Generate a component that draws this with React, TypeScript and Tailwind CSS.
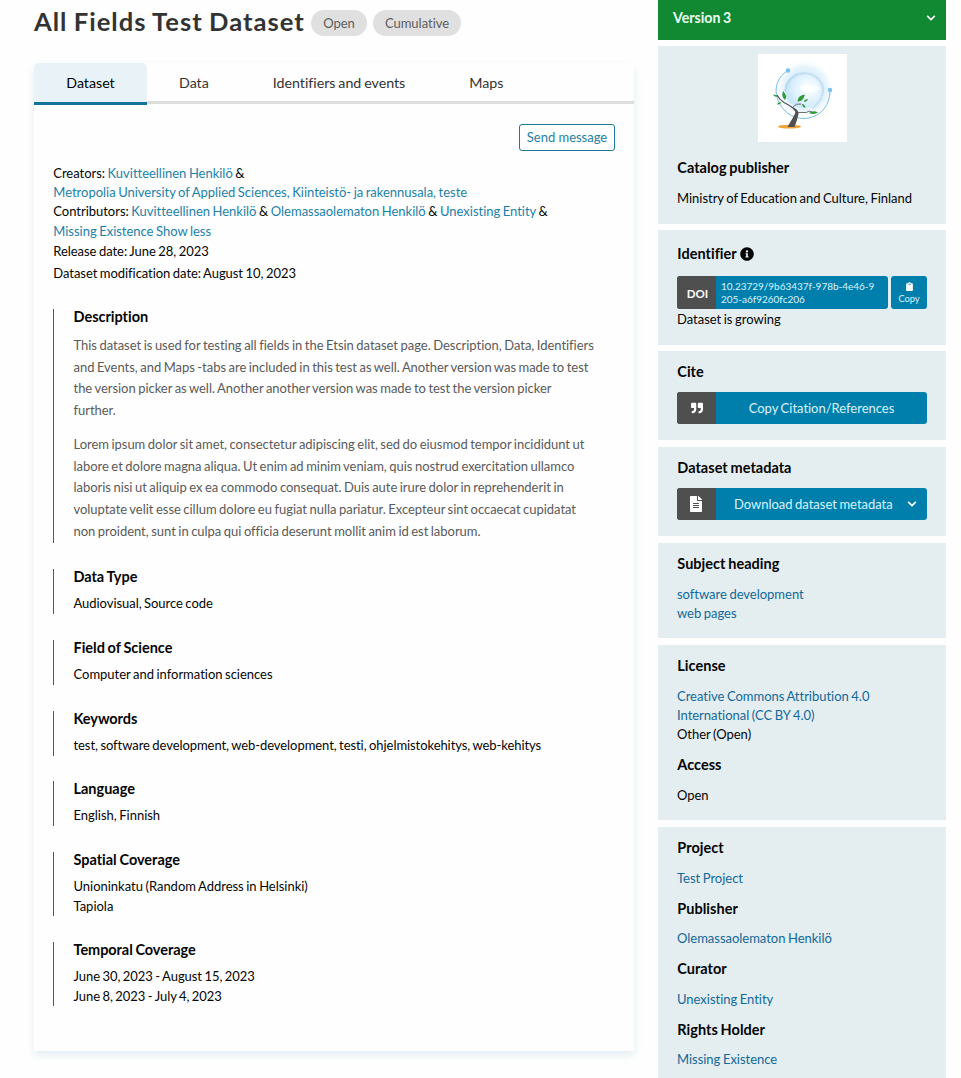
import type { ReactNode } from 'react'
import { FaInfoCircle, FaQuoteRight, FaFileAlt, FaClipboard, FaChevronDown } from 'react-icons/fa'

const tabs = ['Data', 'Identifiers and events', 'Maps']

function Link({ children }: { children: ReactNode }) {
  return <a className="text-[#1c81a9]">{children}</a>
}

function Section({ title, className, children }: { title: string; className: string; children: ReactNode }) {
  return (
    <section className={`flex gap-[19.5px] ${className}`}>
      <div className="w-px shrink-0 bg-[#007a80]" />
      <div>
        <h2 className="h-[25px] text-[14.5px] font-bold leading-[16.4px]">{title}</h2>
        <div className="leading-[19.8px]">{children}</div>
      </div>
    </section>
  )
}

function Panel({ className, children }: { className: string; children: ReactNode }) {
  return <section className={`w-full bg-[#e4edf0] px-[19px] ${className}`}>{children}</section>
}

function PanelTitle({ children }: { children: ReactNode }) {
  return <h2 className="flex items-center pl-[0.3px] text-[14.5px] font-bold leading-5 tracking-[0.02px]">{children}</h2>
}

function Logo() {
  return (
    <svg viewBox="0 0 89 88" className="mx-auto h-[88px] w-[89px] bg-white">
      <defs>
        <radialGradient id="halo">
          <stop offset="0.45" stopColor="#d3ecfc" />
          <stop offset="0.75" stopColor="#e9f5fd" />
          <stop offset="1" stopColor="#fff" stopOpacity="0" />
        </radialGradient>
        <radialGradient id="globe" cx="0.65" cy="0.45" r="0.7">
          <stop offset="0.1" stopColor="#fafdff" />
          <stop offset="0.5" stopColor="#e2f3fe" />
          <stop offset="1" stopColor="#bfe1f8" />
        </radialGradient>
      </defs>
      <circle cx="47" cy="35" r="30" fill="url(#halo)" />
      <circle cx="45" cy="36" r="18" fill="url(#globe)" />
      <path d="M42 33q6-5 10-1q7-2 10 2q-4 6-11 4q-7 1-9-5" fill="#fff" opacity="0.75" />
      <path d="M27 37A19.5 19.5 0 0 1 65 33Q66 45 55 54" fill="none" stroke="#8dbfdc" strokeWidth="2.2" strokeDasharray="1 .7" opacity="0.5" />
      <path d="M30 16.500C20 22 16 34 19 43C23 57 34 64.500 46 64.500C60 64 72 54 72 36" fill="none" stroke="#75bde9" strokeWidth="1" />
      <circle cx="30" cy="16.500" r="2.200" fill="#75c2ef" />
      <circle cx="72" cy="36" r="2.200" fill="#75c2ef" />
      <ellipse cx="31.500" cy="72.700" rx="11.500" ry="1.900" fill="#efa537" />
      <path d="M19 41Q21 45 26 48.500C31 51 36 54 38 57.500" fill="none" stroke="#505050" strokeWidth="1.100" />
      <path d="M29.500 73C34 65 37 61 37.500 57.500Q35 54 32 52Q41 55 40.500 60Q39 67 36.500 73Z" fill="#505050" />
      <path d="M35 53Q38 49 43 50M39.500 58.500H48Q52 56 54 58" fill="none" stroke="#505050" strokeWidth=".8" />
      <g fill="#2f9b35">
        <path d="M25 37Q30 42 27 46Q23 43 25 37Z" />
        <path d="M39.500 47.500Q40 41 47 40.500Q45 48 39.500 47.500Z" />
        <path d="M46 48Q46.500 45 50 45Q49 48 46 48Z" />
        <path d="M43.500 50Q47 50 47.500 54Q44.500 53 43.500 50Z" />
        <path d="M51 59Q55 56 60 58.500Q56 61 51 59Z" />
        <path d="M15 40.500Q18 40 20.500 43Q16 43 15 40.500Z" />
        <path d="M19 50.500Q20 47.500 23.500 48.500Q22 51 19 50.500Z" />
      </g>
    </svg>
  )
}

export default function App() {
  return (
    <div className="h-[1078px] w-[961px] overflow-hidden bg-[#fefefe] font-['Lato',sans-serif] text-[13px] tracking-[-0.02px] text-[#050505] [font-variant-ligatures:none] [word-spacing:-0.75px]">
      <div className="flex gap-6 pl-[34px]">
        <main className="w-[600px] shrink-0">
          <header className="flex h-[63px] items-start whitespace-nowrap">
            <h1 className="w-[277px] pt-[2px] text-[25.6px] font-bold leading-[38px] tracking-[0.97px] text-[#333]">All Fields Test Dataset</h1>
            <span className="mt-[10px] h-[26px] w-14 rounded-full bg-[#e0e0e0] text-center text-[13px] leading-[26px] text-[#5d5d5d]">Open</span>
            <span className="ml-1.5 mt-[10px] h-[26px] w-[88px] rounded-full bg-[#e0e0e0] text-center text-[13px] leading-[26px] text-[#5d5d5d]">Cumulative</span>
          </header>
          <div className="h-[988px] rounded-t-[5px] bg-[#fefefe] shadow-[0_4px_8px_rgba(30,115,160,0.12)]">
            <nav className="flex h-[42px] items-start text-[14.25px] text-[#333]">
              <div className="h-[42px] w-[113px] rounded-t-[5px] border-b-[3px] border-[#137499] bg-[#e8f2f7] text-center leading-10 text-black">Dataset</div>
              <div className="flex h-[41px] grow gap-16 rounded-tr-[5px] border-b-[3px] border-[#dedede] pl-8 leading-10">
                {tabs.map((t) => <span key={t}>{t}</span>)}
              </div>
            </nav>
            <div className="px-[19px] pt-[19px]">
              <div className="flex justify-end">
                <button className="h-[27px] w-24 rounded-[3px] border border-[#1f7898] text-[13px] leading-[25px] text-[#2481a4]">Send message</button>
              </div>
              <div className="whitespace-nowrap pl-[0.3px] pt-[13px] leading-[19.2px]">
                <p>Creators: <Link>Kuvitteellinen Henkilö</Link> &amp;<br /><Link>Metropolia University of Applied Sciences, Kiinteistö- ja rakennusala, teste</Link></p>
                <p>Contributors: <Link>Kuvitteellinen Henkilö</Link> &amp; <Link>Olemassaolematon Henkilö</Link> &amp; <Link>Unexisting Entity</Link> &amp;<br /><Link>Missing Existence</Link> <Link>Show less</Link></p>
                <p className="-mt-px leading-[22px] tracking-[-0.05px]">Release date: June 28, 2023<br />Dataset modification date: August 10, 2023</p>
              </div>
              <div className="flex flex-col whitespace-nowrap pt-[25px]">
                <Section title="Description" className="mb-[26px] h-[234px]">
                  <div className="flex flex-col gap-3 pt-px leading-[21.75px] tracking-[-0.035px] text-[#5a5a5a]">
                    <p>This dataset is used for testing all fields in the Etsin dataset page. Description, Data, Identifiers<br />and Events, and Maps -tabs are included in this test as well. Another version was made to test<br />the version picker as well. Another another version was made to test the version picker<br />further.</p>
                    <p>Lorem ipsum dolor sit amet, consectetur adipiscing elit, sed do eiusmod tempor incididunt ut<br />labore et dolore magna aliqua. Ut enim ad minim veniam, quis nostrud exercitation ullamco<br />laboris nisi ut aliquip ex ea commodo consequat. Duis aute irure dolor in reprehenderit in<br />voluptate velit esse cillum dolore eu fugiat nulla pariatur. Excepteur sint occaecat cupidatat<br />non proident, sunt in culpa qui officia deserunt mollit anim id est laborum.</p>
                  </div>
                </Section>
                <Section title="Data Type" className="mb-[26px] h-[45px] tracking-[-0.05px]">Audiovisual, Source code</Section>
                <Section title="Field of Science" className="mb-[26px] h-[45px]">Computer and information sciences</Section>
                <Section title="Keywords" className="mb-[25.6px] h-[45px] tracking-[-0.07px]">test, software development, web-development, testi, ohjelmistokehitys, web-kehitys</Section>
                <Section title="Language" className="mb-[25.4px] h-[45px]">English, Finnish</Section>
                <Section title="Spatial Coverage" className="mb-[26px] h-16">Unioninkatu (Random Address in Helsinki)<br />Tapiola</Section>
                <Section title="Temporal Coverage" className="h-16 tracking-[-0.06px]">June 30, 2023 - August 15, 2023<br />June 8, 2023 - July 4, 2023</Section>
              </div>
            </div>
          </div>
        </main>

        <aside className="w-72 shrink-0 whitespace-nowrap leading-[19.2px]">
          <div className="mb-1.5 flex h-10 items-center justify-between bg-[#118832] pb-1 pl-[15px] pr-2.5 text-[14.2px] font-bold text-[#e9fff0]">
            Version 3
            <FaChevronDown className="size-2.5 text-white" />
          </div>
          <Panel className="mb-1.5 h-[178px] pt-2">
            <Logo />
            <div className="pt-4"><PanelTitle>Catalog publisher</PanelTitle></div>
            <p className="pt-[11px]">Ministry of Education and Culture, Finland</p>
          </Panel>
          <Panel className="mb-1.5 h-[115px] pt-3.5">
            <PanelTitle>Identifier <FaInfoCircle className="ml-[3px] size-3.5" /></PanelTitle>
            <div className="mt-3 flex h-[33px] gap-[3px]">
              <div className="flex w-[211px] overflow-hidden rounded-[3px] bg-[#007fad] text-[#d9f4ff]">
                <div className="w-[39px] bg-[#4f4f4f] pl-0.5 text-center text-[11.5px] font-bold leading-9 text-white">DOI</div>
                <div className="pl-[5px] pt-1 text-[10px] leading-[13px]">10.23729/9b63437f-978b-4e46-9<br />205-a6f9260fc206</div>
              </div>
              <div className="flex w-9 flex-col items-center rounded-[3px] bg-[#007fad] pt-[6px] text-[9.3px] leading-3 text-[#d9f4ff]">
                <FaClipboard className="mb-0.5 size-[9px] shrink-0 text-white" />Copy
              </div>
            </div>
            <p className="pt-px">Dataset is growing</p>
          </Panel>
          <Panel className="mb-[7px] h-[89px] pt-[11px]">
            <PanelTitle>Cite</PanelTitle>
            <div className="mt-2.5 flex h-8 overflow-hidden rounded-[3px] bg-[#007fad] leading-8 text-[#d9f4ff]">
              <div className="flex w-[39px] items-center justify-center bg-[#4f4f4f] text-white"><FaQuoteRight className="size-3" /></div>
              <div className="grow text-center">Copy Citation/References</div>
            </div>
          </Panel>
          <Panel className="mb-[7px] h-[89px] pt-[11px]">
            <PanelTitle>Dataset metadata</PanelTitle>
            <div className="mt-2.5 flex h-8 overflow-hidden rounded-[3px] bg-[#007fad] leading-8 text-[#d9f4ff]">
              <div className="flex w-[39px] items-center justify-center bg-[#4f4f4f] pr-px text-white"><FaFileAlt className="size-4" /></div>
              <div className="flex grow items-center justify-between pl-[18px] pr-2.5">Download dataset metadata <FaChevronDown className="size-2.5 text-white" /></div>
            </div>
          </Panel>
          <Panel className="mb-[7px] h-[95px] pt-[11px] text-[#12699a]">
            <div className="pb-[11px] text-[#050505]"><PanelTitle>Subject heading</PanelTitle></div>
            <p>software development<br />web pages</p>
          </Panel>
          <Panel className="mb-[7px] h-[175px] pt-[11px]">
            <PanelTitle>License</PanelTitle>
            <p className="pb-2.5 pt-[11px]"><a className="text-[#12699a]">Creative Commons Attribution 4.0<br />International (CC BY 4.0)</a><br />Other (Open)</p>
            <PanelTitle>Access</PanelTitle>
            <p className="pt-[11px]">Open</p>
          </Panel>
          <Panel className="h-[251px] pt-[11px]">
            {[['Project', 'Test Project'], ['Publisher', 'Olemassaolematon Henkilö'], ['Curator', 'Unexisting Entity'], ['Rights Holder', 'Missing Existence']].map(([k, v]) => (
              <div key={k} className="h-[60.5px]">
                <PanelTitle>{k}</PanelTitle>
                <p className="pt-[10.6px] text-[#12699a]">{v}</p>
              </div>
            ))}
          </Panel>
        </aside>
      </div>
    </div>
  )
}
